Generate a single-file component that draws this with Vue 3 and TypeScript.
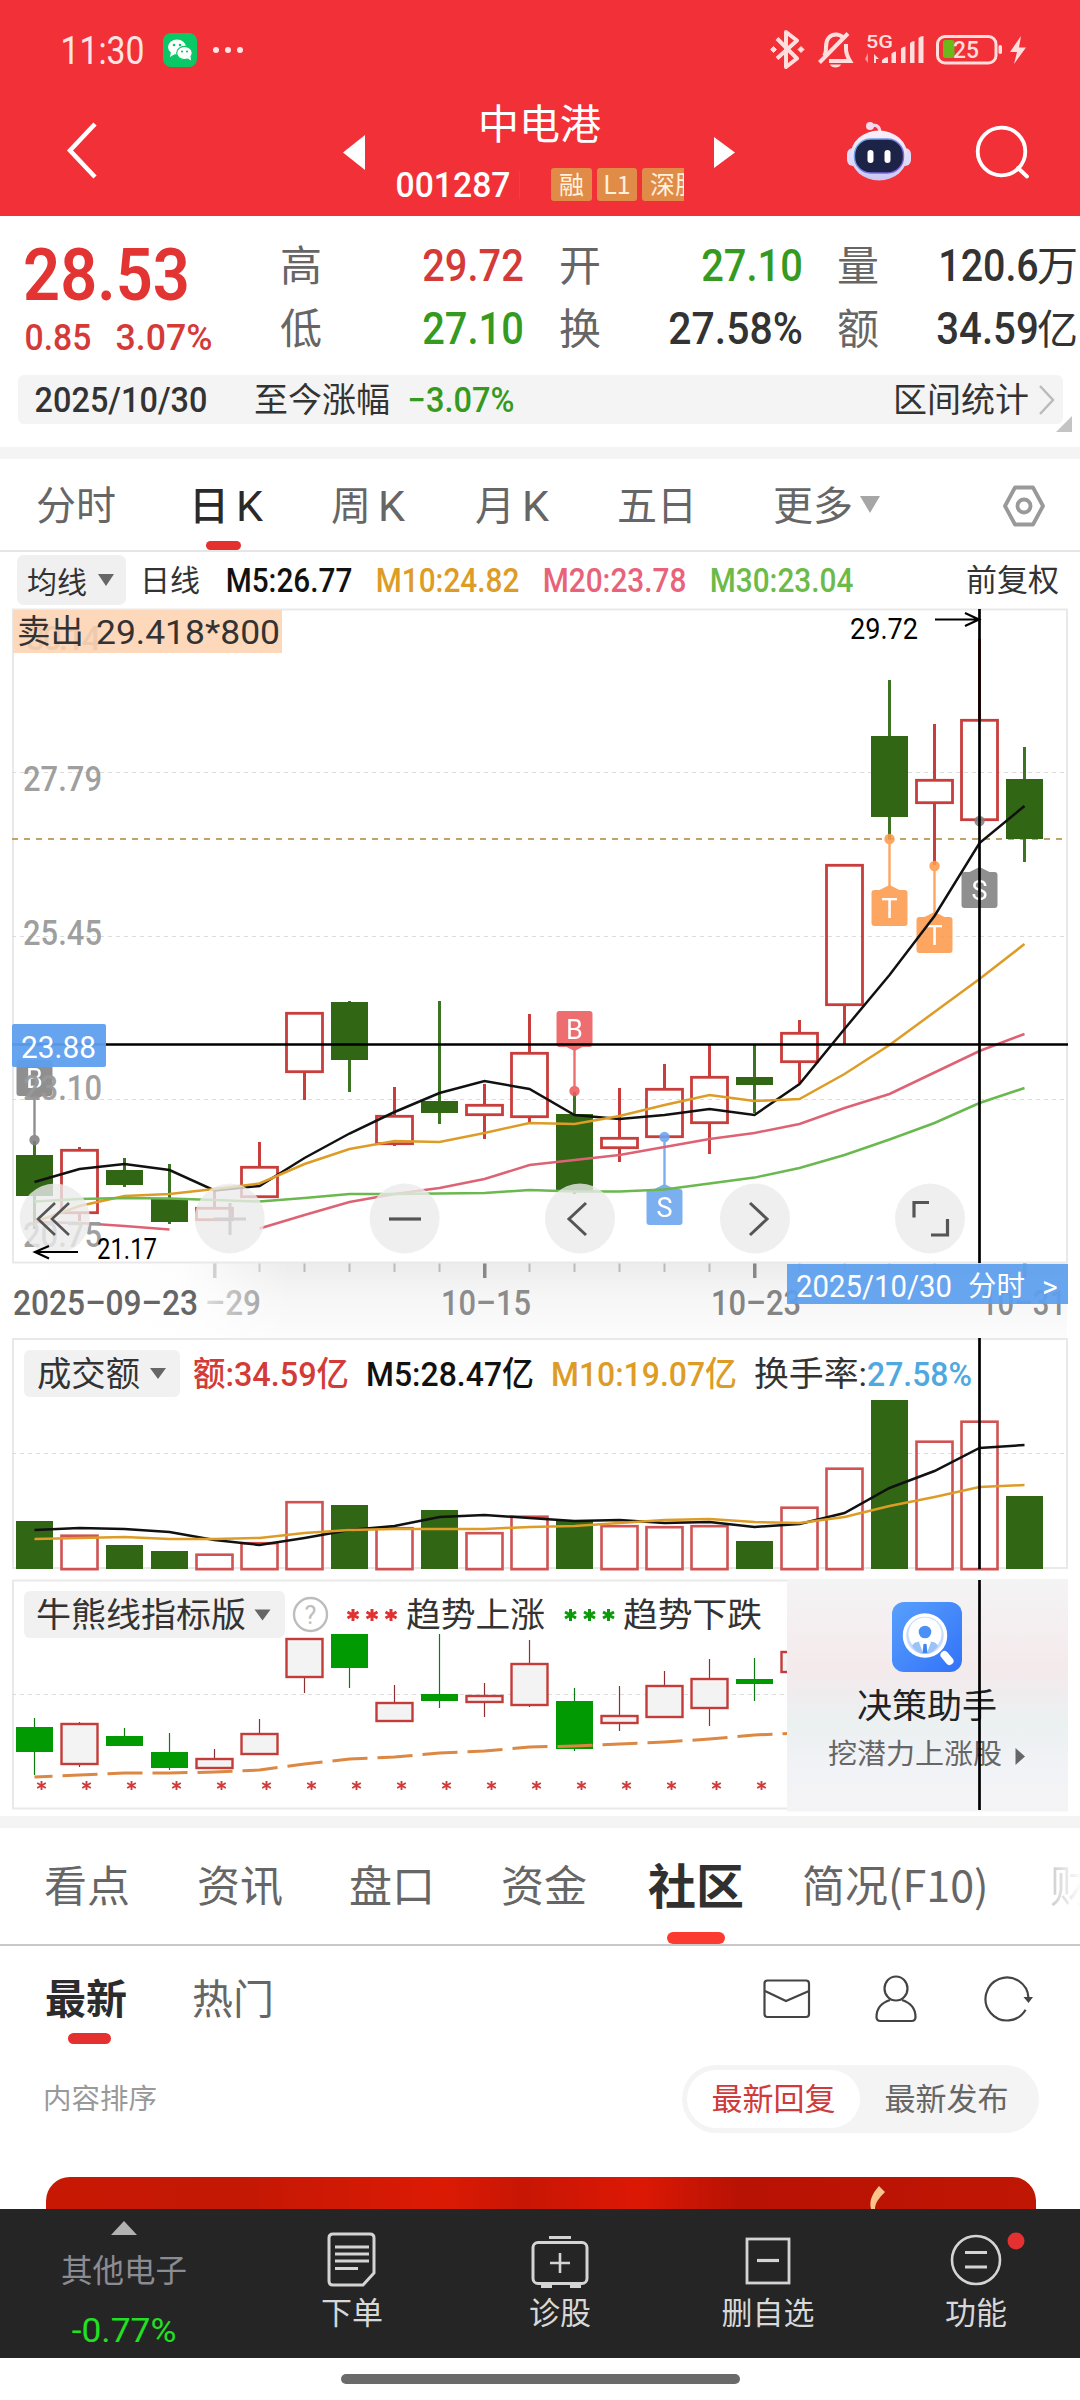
<script setup lang="ts">
import { h } from 'vue'

interface FitProps {
  text: string
  w: number
  size: number
  fill?: string
  weight?: number
}

// Condensed figures: the box is as tall as the capitals and as wide as the ink.
const Fit = (p: FitProps) =>
  h(
    'svg',
    {
      width: p.w,
      height: Math.round(p.size * 0.71),
      style: { display: 'block', overflow: 'visible', flex: 'none' },
    },
    [
      h(
        'text',
        {
          x: -p.size * 0.04,
          y: Math.round(p.size * 0.71),
          textLength: p.w + p.size * 0.08,
          lengthAdjust: 'spacingAndGlyphs',
          fill: p.fill ?? '#333',
          style: {
            fontFamily: 'Roboto, "Noto Sans CJK SC", sans-serif',
            fontSize: p.size + 'px',
            fontWeight: p.weight ?? 500,
          },
        },
        p.text,
      ),
    ],
  )

interface Label {
  t: string
  x: number
  y: number
  w: number
  s: number
  c: string
  b?: number
}

const RED = '#c83e3c'
const GREEN = '#306614'
const cx = (i: number): number => 34.5 + 45 * i

// [up, bodyTop, bodyBottom, wickTop, wickBottom]
type Candle = [number, number, number, number, number]
const candles: Candle[] = [
  [0, 1155, 1196, 1141, 1229], [1, 1149, 1214, 1147, 1221], [0, 1170, 1185, 1158, 1187],
  [0, 1199, 1222, 1164, 1224], [1, 1207, 1221, 1190, 1221], [1, 1166, 1198, 1142, 1198],
  [1, 1012, 1073, 1012, 1100], [0, 1002, 1060, 1001, 1092], [1, 1115, 1145, 1087, 1146],
  [0, 1101, 1113, 1001, 1124], [1, 1104, 1116, 1084, 1139], [1, 1052, 1118, 1014, 1123],
  [0, 1114, 1192, 1092, 1194], [1, 1137, 1149, 1088, 1162], [1, 1088, 1138, 1064, 1138],
  [1, 1076, 1124, 1045, 1154], [0, 1077, 1085, 1044, 1113], [1, 1032, 1063, 1020, 1083],
  [1, 864, 1006, 864, 1044], [0, 736, 817, 680, 839], [1, 779, 804, 724, 865],
  [1, 719, 821, 639, 821], [0, 779, 839, 747, 862],
]
const ma = (a: number[], from = 0): string =>
  a.map((y, i) => `${cx(i + from)},${y}`).join(' ')
const lines: { c: string; p: string }[] = [
  { c: '#111', p: ma([1182, 1169, 1164, 1170, 1190.5, 1186, 1158, 1133.5, 1112, 1093, 1081, 1089, 1115, 1119, 1115, 1109, 1115, 1084, 1029, 975, 916, 843, 806]) },
  { c: '#dd9c26', p: ma([1222, 1206, 1196, 1194, 1189, 1183.5, 1164, 1149, 1141, 1142, 1133, 1123, 1124, 1116, 1105, 1095, 1101, 1099, 1074, 1045, 1012, 979, 944]) },
  { c: '#dd6374', p: ma([1222, 1223, 1226, 1229.5]) },
  { c: '#dd6374', p: ma([1228.5, 1215, 1202, 1194, 1188, 1179, 1165, 1160, 1155, 1147, 1139, 1133, 1124, 1108, 1094, 1072.5, 1051, 1034], 5) },
  { c: '#6ab84f', p: ma([1201.5, 1199, 1198, 1198.5, 1200, 1201.5, 1198, 1194, 1194, 1193.5, 1193, 1190, 1191.5, 1191.5, 1189.5, 1183.5, 1177.6, 1168, 1155, 1139.5, 1123, 1103, 1088]) },
]

const volumes: [number, number][] = [
  [0, 1521], [1, 1534.5], [0, 1545], [0, 1551], [1, 1553.5], [1, 1542], [1, 1501], [0, 1505],
  [1, 1527], [0, 1510], [1, 1532], [1, 1515.5], [0, 1521], [1, 1525], [1, 1526], [1, 1525],
  [0, 1541], [1, 1506.5], [1, 1467.5], [0, 1400], [1, 1440.5], [1, 1420.5], [0, 1496],
]
const volM5 = ma([1530, 1528, 1529, 1532, 1540, 1545, 1538, 1530, 1526, 1517, 1515, 1518, 1521, 1520, 1523, 1522, 1527, 1524, 1513, 1488, 1471, 1448, 1445])
const volM10 = ma([1539, 1538, 1537, 1539, 1539, 1538, 1533, 1530, 1529, 1529, 1529, 1527, 1526, 1523, 1520, 1519, 1522, 1523, 1517, 1506, 1497, 1487, 1485])

const trend: Candle[] = [
  [0, 1727, 1752, 1718, 1775], [1, 1723, 1764, 1722, 1767], [0, 1736, 1746, 1728, 1746],
  [0, 1752, 1768, 1733, 1770], [1, 1758, 1768, 1749, 1768], [1, 1733, 1754, 1719, 1754],
  [1, 1638, 1677, 1638, 1693], [0, 1634, 1668, 1634, 1688], [1, 1702, 1721, 1685, 1722],
  [0, 1694, 1701, 1634, 1708], [1, 1695, 1702, 1683, 1717], [1, 1663, 1705, 1640, 1707],
  [0, 1701, 1749, 1688, 1751], [1, 1715, 1723, 1686, 1731], [1, 1685, 1717, 1671, 1717],
  [1, 1678, 1708, 1659, 1726], [0, 1679, 1684, 1658, 1701], [1, 1651, 1672, 1651, 1672],
]
const trendY = [1777, 1775, 1773, 1773, 1772, 1770, 1764, 1759, 1757, 1753, 1751, 1747, 1746, 1744, 1742, 1739, 1735, 1733, 1730]
const trendDashes: string[] = trendY.slice(0, 18).map((y, i) => {
  const left = i === 0 ? `${cx(0)},${y}` : `${cx(i) - 17},${y + (trendY[i - 1] - y) * 0.38}`
  return `${left} ${cx(i)},${y} ${cx(i) + 18},${y + (trendY[i + 1] - y) * 0.4}`
})

const axisLabels: Label[] = [
  { t: '27.79', x: 24, y: 790.5, w: 77, s: 35, c: '#999' },
  { t: '25.45', x: 24, y: 944.5, w: 77, s: 35, c: '#999' },
  { t: '23.10', x: 24, y: 1100, w: 77, s: 35, c: '#999' },
  { t: '20.75', x: 24, y: 1247, w: 77, s: 35, c: '#999' },
]
const dateLabels: Label[] = [
  { t: '2025–09–23', x: 14, y: 1315, w: 183, s: 35, c: '#666' },
  { t: '10–15', x: 442, y: 1315, w: 88, s: 35, c: '#8c8c8c' },
  { t: '10–23', x: 712, y: 1315, w: 88, s: 35, c: '#848484' },
  { t: '10–31', x: 982, y: 1315, w: 83, s: 35, c: '#8c8c8c' },
]
const headLabels: Label[] = [
  { t: '成交额', x: 38, y: 1386, w: 101, s: 34, c: '#333', b: 400 },
  { t: '额:34.59亿', x: 194, y: 1386, w: 154, s: 34, c: '#d23b38' },
  { t: 'M5:28.47亿', x: 367, y: 1386, w: 166, s: 34, c: '#111' },
  { t: 'M10:19.07亿', x: 552, y: 1386, w: 184, s: 34, c: '#dd9c26' },
  { t: '换手率:', x: 755, y: 1386, w: 111, s: 34, c: '#333', b: 400 },
  { t: '27.58%', x: 868, y: 1386, w: 103, s: 34, c: '#4fa8e0' },
  { t: '牛熊线指标版', x: 37, y: 1627, w: 208, s: 34, c: '#333', b: 400 },
  { t: '趋势上涨', x: 407, y: 1627, w: 137, s: 34, c: '#333', b: 400 },
  { t: '趋势下跌', x: 624, y: 1627, w: 137, s: 34, c: '#333', b: 400 },
]

interface Marker { i: number; t: string; c: string; top: number; dot: number; up: boolean }
const markers: Marker[] = [
  { i: 0, t: 'B', c: '#808080', top: 1060, dot: 1140, up: false },
  { i: 12, t: 'B', c: '#ec5a5c', top: 1011, dot: 1091, up: false },
  { i: 14, t: 'S', c: '#6ba5ee', top: 1189, dot: 1137, up: true },
  { i: 19, t: 'T', c: '#fd9a4c', top: 890, dot: 839, up: true },
  { i: 20, t: 'T', c: '#fd9a4c', top: 917, dot: 866, up: true },
  { i: 21, t: 'S', c: '#808080', top: 872, dot: 821, up: true },
]

const periods = [
  { t: '分时', x: 36, w: 80 }, { t: '日', k: true, x: 189, w: 74, on: true }, { t: '周', k: true, x: 331, w: 74 },
  { t: '月', k: true, x: 475, w: 74 }, { t: '五日', x: 617, w: 80 }, { t: '更多', x: 773, w: 80 },
]
const gap = (list: { x: number; w: number }[], i: number): number =>
  i === 0 ? list[0].x : list[i].x - list[i - 1].x - list[i - 1].w

const sections = [
  { t: '看点', x: 44, w: 86 }, { t: '资讯', x: 197, w: 86 }, { t: '盘口', x: 349, w: 86 },
  { t: '资金', x: 501, w: 86 }, { t: '社区', x: 648, w: 97, on: true }, { t: '简况(F10)', x: 802, w: 186 },
  { t: '财', x: 1050, w: 86, fade: true },
]
</script>

<template>
  <div class="app">
    <header class="top">
      <div class="status">
        <Fit text="11:30" :w="81" :size="38" fill="#ffe4e4" :weight="400" />
        <svg class="wechat" width="34" height="34" viewBox="0 0 34 34">
          <rect width="34" height="34" rx="8" fill="#0bc866" />
          <ellipse cx="14" cy="14" rx="9" ry="7.6" fill="#fff" />
          <path d="M8 19l-1 5 5-3z" fill="#fff" />
          <ellipse cx="21.5" cy="20" rx="7.8" ry="6.6" fill="#fff" stroke="#0bc866" stroke-width="1.2" />
          <path d="M24 25l4 2.6-.6-4.6z" fill="#fff" />
          <g fill="#0bc866"><circle cx="11" cy="12" r="1.3" /><circle cx="17" cy="12" r="1.3" /><circle cx="19" cy="18.5" r="1.1" /><circle cx="24" cy="18.5" r="1.1" /></g>
        </svg>
        <i class="pip" /><i class="pip" /><i class="pip" />
        <svg class="sys" width="262" height="44" viewBox="768 28 262 44" fill="none" stroke="#ffdede">
          <path d="M777 38.500l20 20-11 8.500v-35l11 8.500-20 18" stroke-width="4" stroke-linejoin="round" />
          <g fill="#ffdede" stroke="none"><path d="M773.500 46.500l3 3-3 3-3-3zM801 46.500l3 3-3 3-3-3z" stroke="#ffdede" stroke-width="1" /></g>
          <path d="M824 56c2-2.500 2-5 2-9 0-8 4-12.500 10-12.500 3 0 5 1 7 3M846 44v5c0 5 1 7 4 12h-21" stroke-width="4" />
          <path d="M819.500 62.500L848 33.500" stroke-width="4" />
          <path d="M830 64.500h11c-1 4-10 4-11 0z" fill="#ffdede" stroke="none" />
          <text x="866" y="48" textLength="27" lengthAdjust="spacingAndGlyphs" class="net">5G</text>
          <g fill="#ffdede" stroke="none">
            <path d="M882 63v-3q3-3 6-3v6zM891.500 63V53.500q2-2 4.500-2V63zM901 63V48.500q2-2 4.500-2V63zM910 63V43q2-2 4.500-2V63zM918.500 63V38q2-2 5-2V63z" />
            <path d="M874 54l5 5h-3v4h-2z" /><path d="M868 53v10l-3-4z" opacity=".6" />
          </g>
          <rect x="937.500" y="36.500" width="58.500" height="26.500" rx="7.500" stroke-width="3" />
          <rect x="943" y="40" width="11.500" height="18" rx="2.500" fill="#6ab81a" stroke="none" />
          <text x="953" y="58" textLength="26" lengthAdjust="spacingAndGlyphs" class="pct">25</text>
          <rect x="998.500" y="45" width="3.500" height="9" rx="1.700" fill="#ffdede" stroke="none" />
          <path d="M1021 36l-11 16h7l-3 12 12-16.500h-7z" fill="#ffdede" stroke="none" />
        </svg>
      </div>
      <div class="nav">
        <svg class="back" width="36" height="60" viewBox="0 0 36 60"><path d="M31 4L6 30.500 31 57" fill="none" stroke="#fff" stroke-width="4.500" /></svg>
        <svg class="prev" width="22" height="35" viewBox="0 0 22 35"><path d="M22 0v35L0 17.500z" fill="#fff" /></svg>
        <div class="stock">
          <div class="name">中电港</div>
          <div class="code">
            <Fit text="001287" :w="112" :size="35" fill="#fff" />
            <i class="sep" />
            <div class="tags"><span>融</span><span class="l1">L1</span><span class="deep">深股</span></div>
          </div>
        </div>
        <svg class="next" width="21" height="31" viewBox="0 0 21 31"><path d="M0 0v31l21-15.500z" fill="#fff" /></svg>
        <svg class="robot" width="64" height="60" viewBox="0 0 64 60">
          <defs>
            <linearGradient id="shell" x1="0" y1="0" x2="0" y2="1"><stop offset="0" stop-color="#fdf0fa" /><stop offset=".6" stop-color="#e0daf6" /><stop offset="1" stop-color="#c9c6f4" /></linearGradient>
            <linearGradient id="rim" x1="0" y1="0" x2="1" y2="1"><stop offset="0" stop-color="#6cb8e8" /><stop offset="1" stop-color="#7b4ee0" /></linearGradient>
          </defs>
          <path d="M24 5c6-2 9 1 9 7" fill="none" stroke="#f6d4e8" stroke-width="3" />
          <circle cx="23" cy="5" r="4" fill="#f8d9ec" />
          <rect x="0" y="27" width="64" height="18" rx="6" fill="#dedaf8" />
          <ellipse cx="32" cy="34.500" rx="28.500" ry="25" fill="url(#shell)" />
          <rect x="7.500" y="18" width="49" height="34" rx="16" fill="#1c2346" stroke="url(#rim)" stroke-width="1.400" />
          <rect x="20.500" y="29" width="6" height="13" rx="3" fill="#fff" /><rect x="37.500" y="29" width="6" height="13" rx="3" fill="#fff" />
        </svg>
        <svg class="search" width="56" height="56" viewBox="0 0 56 56" fill="none" stroke="#fff" stroke-width="3.800"><circle cx="26.500" cy="26.500" r="23.800" /><path d="M43 43l9 8.500" stroke-linecap="round" /></svg>
      </div>
    </header>

    <section class="quote">
      <div class="price">
        <Fit text="28.53" :w="161" :size="73" fill="#e23432" :weight="600" />
        <div class="delta">
          <Fit text="0.85" :w="64" :size="37" fill="#d43a38" />
          <Fit text="3.07%" :w="94" :size="37" fill="#d43a38" />
        </div>
      </div>
      <div class="pair p1">
        <div><span>高</span><Fit text="29.72" :w="98" :size="44" fill="#d43a38" /></div>
        <div><span>低</span><Fit text="27.10" :w="98" :size="44" fill="#349a22" /></div>
      </div>
      <div class="pair p2">
        <div><span>开</span><Fit text="27.10" :w="98" :size="44" fill="#349a22" /></div>
        <div><span>换</span><Fit text="27.58%" :w="131" :size="44" /></div>
      </div>
      <div class="pair p3">
        <div><span>量</span><div class="big"><Fit text="120.6" :w="97" :size="44" /><b>万</b></div></div>
        <div><span>额</span><div class="big"><Fit text="34.59" :w="99" :size="44" /><b>亿</b></div></div>
      </div>
    </section>

    <section class="range">
      <Fit text="2025/10/30" :w="170" :size="35" />
      <span class="since">至今涨幅</span>
      <Fit text="−3.07%" :w="104" :size="35" fill="#349a22" />
      <span class="stat">区间统计</span>
      <svg width="18" height="32" viewBox="0 0 18 32"><path d="M2 2l13 14L2 30" fill="none" stroke="#bbb" stroke-width="2.500" /></svg>
      <svg class="corner" width="16" height="16"><path d="M16 0v16H0z" fill="#c4c4c4" /></svg>
    </section>

    <div class="band" />

    <nav class="periods">
      <div v-for="(p, i) in periods" :key="p.t" class="period" :class="{ on: p.on }" :style="{ marginLeft: gap(periods, i) + 'px', width: p.w + 'px' }">
        <span>{{ p.t }}</span><span v-if="p.k" class="k">K</span>
      </div>
      <svg class="more" width="20" height="17"><path d="M0 0h20L10 17z" fill="#a6a6a6" /></svg>
      <svg class="hex" width="42" height="42" viewBox="0 0 42 42" fill="none" stroke="#999" stroke-width="3.800"><path d="M12 2.500h18l10 18.500-10 18.500H12L2 21z" stroke-linejoin="round" /><circle cx="21" cy="21" r="6.500" /></svg>
    </nav>

    <div class="averages">
      <div class="pick"><span>均线</span><svg width="16" height="12"><path d="M0 0h16L8 12z" fill="#666" /></svg></div>
      <span class="daily">日线</span>
      <Fit text="M5:26.77" :w="124" :size="33" fill="#111" style="margin-left: 27px" />
      <Fit text="M10:24.82" :w="141" :size="33" fill="#dd9c26" style="margin-left: 26px" />
      <Fit text="M20:23.78" :w="141" :size="33" fill="#e8637a" style="margin-left: 26px" />
      <Fit text="M30:23.04" :w="141" :size="33" fill="#6cbb4a" style="margin-left: 26px" />
      <span class="adjust">前复权</span>
    </div>

    <svg class="charts" width="1080" height="1208" viewBox="0 608 1080 1208">
      <defs>
        <linearGradient id="axis" x1="0" y1="0" x2="0" y2="1"><stop offset="0" stop-color="#ececec" /><stop offset=".45" stop-color="#f6f6f6" /><stop offset="1" stop-color="#fcfcfc" /></linearGradient>
        <linearGradient id="veil" x1="0" y1="0" x2="1" y2="0"><stop offset="0" stop-color="#fff" /><stop offset=".62" stop-color="#fff" stop-opacity=".9" /><stop offset="1" stop-color="#fff" stop-opacity="0" /></linearGradient>
        <linearGradient id="promo" x1="0" y1="0" x2="0" y2="1"><stop offset="0" stop-color="#f4f4f5" /><stop offset=".38" stop-color="#f4eaec" /><stop offset=".62" stop-color="#ebf0f1" /><stop offset=".82" stop-color="#f2f3f6" /><stop offset="1" stop-color="#f5f3f6" /></linearGradient>
        <linearGradient id="tile" x1="0" y1="0" x2="1" y2="1"><stop offset="0" stop-color="#58a0fd" /><stop offset="1" stop-color="#3272f8" /></linearGradient>
        <clipPath id="left"><rect x="12" y="1580" width="776" height="232" /></clipPath>
      </defs>

      <!-- date axis -->
      <rect x="0" y="1263" width="1067" height="75" fill="url(#axis)" />
      <rect v-for="i in 19" :key="'t' + i" :x="cx(i + 3) - ((i + 3) % 6 === 4 ? 1.5 : 1)" y="1263" :width="(i + 3) % 6 === 4 ? 3.500 : 2" :height="(i + 3) % 6 === 4 ? 15 : 9" :fill="(i + 3) % 6 === 4 ? '#888' : '#bbb'" />
      <text x="205" y="1315" textLength="56" lengthAdjust="spacingAndGlyphs" class="num" font-size="35" fill="#8c8c8c">–29</text>
      <rect x="0" y="1263" width="290" height="75" fill="url(#veil)" />
      <text v-for="l in dateLabels" :key="l.t" :x="l.x - 1" :y="l.y" :textLength="l.w + 2" lengthAdjust="spacingAndGlyphs" class="num" :font-size="l.s" :fill="l.c">{{ l.t }}</text>

      <!-- frames and grid -->
      <g fill="none" stroke="#e9e9e9" stroke-width="2">
        <rect x="13" y="609.500" width="1054" height="653" />
        <rect x="13" y="1339" width="1054" height="229" />
        <rect x="13" y="1580.500" width="1054" height="228" />
      </g>
      <g stroke="#dcdcdc" stroke-width="1.200" stroke-dasharray="4 4"><path d="M12 772.500H1066M12 936.500H1066M12 1099.500H1066M12 1453.500H1066M12 1694.500H788" /></g>
      <path d="M12 839H1064" stroke="#c2a268" stroke-width="2" stroke-dasharray="6 6" />

      <!-- candles -->
      <g v-for="(k, i) in candles" :key="'c' + i">
        <template v-if="k[0]">
          <path :d="`M${cx(i)} ${k[3]}V${k[1]}M${cx(i)} ${k[2]}V${k[4]}`" :stroke="RED" stroke-width="3" />
          <rect :x="cx(i) - 18" :y="k[1] + 1.300" width="36" :height="k[2] - k[1] - 2.600" fill="none" :stroke="RED" stroke-width="2.800" />
        </template>
        <template v-else>
          <path :d="`M${cx(i)} ${k[3]}V${k[4]}`" stroke="#3c7424" stroke-width="3" />
          <rect :x="cx(i) - 18.500" :y="k[1]" width="37" :height="k[2] - k[1]" :fill="GREEN" />
        </template>
      </g>

      <!-- trade markers -->
      <g v-for="m in markers" :key="'m' + m.i" opacity=".88">
        <path v-if="m.i !== 21" :d="`M${cx(m.i)} ${m.up ? m.top - 4 : m.top + 36}V${m.dot}`" :stroke="m.c" stroke-width="2.400" />
        <circle :cx="cx(m.i)" :cy="m.dot" r="5.200" :fill="m.c" />
        <path v-if="m.up" :d="`M${cx(m.i) - 10} ${m.top}l10 -5 10 5z`" :fill="m.c" />
        <path v-else :d="`M${cx(m.i) - 10} ${m.top + 35}l10 5 10 -5z`" :fill="m.c" />
        <rect :x="cx(m.i) - 18" :y="m.top" width="36" height="36" rx="3" :fill="m.c" />
        <text :x="cx(m.i)" :y="m.top + 28" text-anchor="middle" class="mark">{{ m.t }}</text>
      </g>

      <polyline v-for="(l, i) in lines" :key="'l' + i" :points="l.p" fill="none" :stroke="l.c" stroke-width="2.500" />
      <text v-for="l in axisLabels" :key="l.t" :x="l.x - 1" :y="l.y" :textLength="l.w + 2" lengthAdjust="spacingAndGlyphs" class="num" :font-size="l.s" :fill="l.c" fill-opacity=".95">{{ l.t }}</text>

      <!-- chart controls -->
      <g fill="#ebebeb" fill-opacity=".8"><circle v-for="x in [54.8, 229.7, 404.6, 580, 755, 930]" :key="x" :cx="x" cy="1218.500" r="35" /></g>
      <g fill="none" stroke="#555" stroke-width="3">
        <path d="M55 1203l-17 16 17 16M69 1203l-17 16 17 16" stroke-width="2.600" />
        <path d="M214 1219h32M230 1203v32" stroke="#d2d2d2" />
        <path d="M389 1219h32" stroke-width="3.200" />
        <path d="M586 1203l-17 16 17 16M750 1203l17 16-17 16" />
        <path d="M914 1217.500v-15h15M931 1235h16.500v-16" stroke-width="3.200" />
      </g>

      <!-- sold tag, high and low -->
      <rect x="13" y="610" width="269" height="43" fill="#fdd8bb" />
      <text x="26" y="650" textLength="75" class="num" font-size="34" fill="#e9c5a8" fill-opacity=".7">30.14</text>
      <text x="17" y="643" textLength="67" lengthAdjust="spacingAndGlyphs" class="cjk" font-size="33" fill="#333">卖出</text>
      <text x="96" y="644" textLength="184" lengthAdjust="spacingAndGlyphs" class="thin" font-size="34" fill="#333">29.418*800</text>
      <text x="850" y="638.500" textLength="68" lengthAdjust="spacingAndGlyphs" class="thin" font-size="29">29.72</text>
      <path d="M935 619.500h43M965 613l14 6.500-14 6.500" fill="none" stroke="#000" stroke-width="2.200" />
      <text x="97" y="1259" textLength="60" lengthAdjust="spacingAndGlyphs" class="thin" font-size="29">21.17</text>
      <path d="M78 1252H36M49 1246l-14 6 14 6.500" fill="none" stroke="#000" stroke-width="2.200" />

      <!-- volume bars -->
      <g v-for="(v, i) in volumes" :key="'v' + i">
        <rect v-if="v[0]" :x="cx(i) - 18" :y="v[1] + 1.200" width="36" :height="1568 - v[1]" fill="none" stroke="#cf5352" stroke-width="2.600" />
        <rect v-else :x="cx(i) - 18.500" :y="v[1]" width="37" :height="1569 - v[1]" :fill="GREEN" />
      </g>
      <g fill="none" stroke-width="2.500"><polyline :points="volM5" stroke="#111" /><polyline :points="volM10" stroke="#dd9c26" /></g>

      <!-- indicator -->
      <g clip-path="url(#left)">
        <g v-for="(k, i) in trend" :key="'i' + i">
          <path :d="`M${cx(i)} ${k[3]}V${k[4]}`" :stroke="k[0] ? '#8e3030' : '#0f7a14'" stroke-width="1.200" />
          <rect v-if="k[0]" :x="cx(i) - 18" :y="k[1] + 1" width="36" :height="k[2] - k[1] - 1" fill="#f4f3f4" stroke="#c43c3a" stroke-width="2.400" />
          <rect v-else :x="cx(i) - 18.500" :y="k[1]" width="37" :height="k[2] - k[1]" fill="#029a02" />
        </g>
        <polyline v-for="(d, i) in trendDashes" :key="'d' + i" :points="d" fill="none" stroke="#dc8843" stroke-width="3" />
        <g v-for="i in 17" :key="'s' + i" stroke="#cf3a3a" stroke-width="1.900"><path :d="`M${cx(i) - 38} 1781v9m-4.300 -7l8.600 5m0 -5l-8.600 5`" /></g>
      </g>
      <rect x="24" y="1350" width="156" height="47" rx="6" fill="#f1f1f1" />
      <rect x="24" y="1591" width="261" height="47" rx="6" fill="#f1f1f1" />
      <path d="M150 1368h16l-8 11zM254.500 1609.500h16l-8 11z" fill="#666" />
      <text v-for="l in headLabels" :key="l.t" :x="l.x - 1" :y="l.y" :textLength="l.w + 2" lengthAdjust="spacingAndGlyphs" class="num" :font-size="l.s" :fill="l.c" :style="{ fontWeight: l.b ?? 500 }">{{ l.t }}</text>
      <circle cx="310.500" cy="1614.500" r="16.500" fill="none" stroke="#bdbdbd" stroke-width="2.400" />
      <text x="310.500" y="1623.500" text-anchor="middle" class="thin" font-size="25" fill="#bdbdbd">?</text>
      <path v-for="x in [353, 372, 391]" :key="x" :d="`M${x} 1609v12m-5.500 -9l11 6m0 -6l-11 6`" stroke="#e03030" stroke-width="3" />
      <path v-for="x in [570.5, 589.5, 608.5]" :key="x" :d="`M${x} 1609v12m-5.500 -9l11 6m0 -6l-11 6`" stroke="#0a9a0a" stroke-width="3" />

      <!-- promo card -->
      <rect x="787" y="1579.500" width="281" height="232" fill="url(#promo)" />
      <rect x="892" y="1602" width="70" height="70" rx="12" fill="url(#tile)" />
      <circle cx="925" cy="1635.500" r="20.500" fill="#c9dcfb" stroke="#fff" stroke-width="3.500" />
      <circle cx="925" cy="1634" r="16.500" fill="#fff" />
      <path d="M912 1646c3-6 8-4 13-4s10-2 13 4c-3 5-8 8-13 8s-10-3-13-8z" fill="#9cc3f8" />
      <circle cx="925" cy="1632" r="6.300" fill="#4a90f5" />
      <path d="M919 1642l4 11 2-11 2 11 4-11z" fill="#fff" /><path d="M923.500 1644h3l1 9h-5z" fill="#3d84f0" />
      <path d="M944.500 1655l5 6" stroke="#fff" stroke-width="8" stroke-linecap="round" />
      <text x="857" y="1718" textLength="140" lengthAdjust="spacingAndGlyphs" class="cjk" font-size="34" fill="#222">决策助手</text>
      <text x="828" y="1764" textLength="174" lengthAdjust="spacingAndGlyphs" class="cjk" font-size="28.500" fill="#666">挖潜力上涨股</text>
      <path d="M1015.500 1748v17l9.500-8.500z" fill="#666" />

      <!-- crosshair -->
      <path d="M12 1044.500H1068M979.500 609V1263M979.500 1338V1569M979.500 1580V1810" stroke="#000" stroke-width="2.700" />
      <rect x="12" y="1024" width="94" height="43" rx="2" fill="#5f9fee" fill-opacity=".95" />
      <text x="21" y="1058" textLength="75" lengthAdjust="spacingAndGlyphs" class="thin" font-size="31" fill="#fff">23.88</text>
      <rect x="787" y="1264" width="281" height="40" fill="#5f9fee" fill-opacity=".94" />
      <text x="796" y="1297" textLength="156" lengthAdjust="spacingAndGlyphs" class="thin" font-size="31" fill="#fff">2025/10/30</text>
      <text x="968" y="1296" textLength="57" lengthAdjust="spacingAndGlyphs" class="cjk" font-size="28" fill="#fff">分时</text>
      <text x="1042" y="1297" textLength="17" class="thin" font-size="30" fill="#fff">&gt;</text>
    </svg>

    <div class="band thin-band" />

    <nav class="sections">
      <div v-for="(s, i) in sections" :key="s.t" class="section" :class="{ on: s.on, fade: s.fade }" :style="{ marginLeft: gap(sections, i) + 'px', width: s.w + 'px' }">{{ s.t }}</div>
    </nav>

    <div class="feed">
      <div class="newest">最新</div>
      <div class="hot">热门</div>
      <svg class="mail" width="48" height="40" viewBox="0 0 48 40" fill="none" stroke="#444" stroke-width="2.200"><rect x="1.500" y="1.500" width="44.500" height="36.500" rx="3" /><path d="M2 12l21 10L46 12" /></svg>
      <svg class="person" width="42" height="48" viewBox="0 0 42 48" fill="none" stroke="#444" stroke-width="2.200"><ellipse cx="21" cy="13.500" rx="11.500" ry="12" /><path d="M15 25C6 28 1.500 34 1.500 42q0 4 4 4h31q4 0 4-4C40.500 34 36 28 27 25" /></svg>
      <svg class="reload" width="50" height="46" viewBox="0 0 50 46"><path d="M42.600 33.800A21.500 21.500 0 1 1 45.500 22" fill="none" stroke="#444" stroke-width="2.200" /><path d="M40.500 21h9.500l-4.500 6z" fill="#444" /></svg>
    </div>

    <div class="sort">
      <span class="hint">内容排序</span>
      <div class="segment"><span class="seg active">最新回复</span><span class="seg">最新发布</span></div>
    </div>

    <div class="banner">
      <svg width="990" height="32" viewBox="0 0 990 32"><path d="M833 9l6 6c-6 6-10 11-10 17h-4c-2-8 1-15 8-23z" fill="#fbc48c" /></svg>
    </div>

    <footer class="dock">
      <div class="sector">
        <svg width="26" height="14"><path d="M13 0l13 14H0z" fill="#b2b2b2" /></svg>
        <span>其他电子</span>
        <Fit text="-0.77%" :w="102" :size="34" fill="#22e022" :weight="400" />
      </div>
      <div class="item">
        <svg width="50" height="56" viewBox="0 0 50 56" fill="none" stroke="#d4d4d4" stroke-width="3"><path d="M6 2h37q4 0 4 4v35L36 53H6q-4 0-4-4V6q0-4 4-4z" /><path d="M8 15h34M8 22h34M8 29h34M8 36.500h23" /></svg>
        <span>下单</span>
      </div>
      <div class="item">
        <svg width="60" height="56" viewBox="0 0 60 56" fill="none" stroke="#d4d4d4" stroke-width="3"><path d="M19 5.500h22" /><rect x="3" y="10.500" width="54" height="41" rx="5" /><path d="M30 21v20M20 31h20" stroke-width="2.600" /><path d="M11 54h11M40 54h11" stroke-width="4" /></svg>
        <span>诊股</span>
      </div>
      <div class="item">
        <svg width="48" height="56" viewBox="0 0 48 56" fill="none" stroke="#d4d4d4" stroke-width="2.800"><rect x="3" y="7" width="42" height="44" /><path d="M13 28.500h22" stroke-width="3.200" /></svg>
        <span>删自选</span>
      </div>
      <div class="item">
        <svg width="100" height="56" viewBox="0 0 100 56" fill="none" stroke="#d4d4d4" stroke-width="2.600"><circle cx="50" cy="28" r="24" /><path d="M39 20.500h22M39 35h22" stroke-width="3" /><circle cx="90" cy="9" r="8.500" fill="#e43030" stroke="none" /></svg>
        <span>功能</span>
      </div>
    </footer>
    <div class="home"><i /></div>
  </div>
</template>

<style>
html, body { background: #fff; }
</style>

<style scoped>
.app {
  width: 1080px;
  height: 2400px;
  overflow: hidden;
  background: #fff;
  color: #333;
  font-family: "Noto Sans CJK SC", Roboto, sans-serif;
  display: flex;
  flex-direction: column;
}
.app > * { flex: none; }
svg { flex: none; display: block; }
.num { font-family: Roboto, "Noto Sans CJK SC", sans-serif; font-weight: 500; }
.thin { font-family: Roboto, "Noto Sans CJK SC", sans-serif; font-weight: 400; }
.cjk { font-family: "Noto Sans CJK SC", sans-serif; }
.mark { font: 400 27px Roboto, sans-serif; fill: #fff; }
.net { font: 500 19px Roboto, sans-serif; fill: #ffdede; stroke: none; }
.pct { font: 500 23px Roboto, sans-serif; fill: #ffdede; stroke: none; }

.top { height: 216px; background: #f23037; }
.status { height: 100px; display: flex; align-items: center; padding-left: 62px; }
.wechat { margin: 0 14px 0 20px; }
.pip { width: 6px; height: 6px; border-radius: 50%; background: #ffe4e4; margin-left: 6px; }
.pip:first-of-type { margin-left: 2px; }
.sys { margin-left: 525px; }
.nav { height: 116px; display: flex; align-items: flex-start; }
.back { margin: 20px 0 0 64px; }
.prev { margin: 35px 0 0 243px; }
.stock { margin-left: 28px; width: 293px; display: flex; flex-direction: column; }
.name { margin: -7px 0 0 85px; font-size: 41px; line-height: 56px; color: #fff; height: 56px; }
.code { display: flex; align-items: center; margin: 19px 0 0 4px; height: 33px; }
.sep { width: 1px; height: 28px; background: #d84a48; margin: 0 31px 0 10px; }
.tags { width: 133px; display: flex; gap: 5px; overflow: hidden; }
.tags span { flex: none; width: 41px; height: 33px; border-radius: 3px; background: #e18b49; color: #fff1dc; font-size: 25px; line-height: 31px; text-align: center; }
.tags .l1 { width: 40px; }
.tags .deep { width: 90px; text-align: left; text-indent: 8px; }
.next { margin: 37px 0 0 28px; }
.robot { margin: 21px 0 0 112px; }
.search { margin: 25px 0 0 64px; }

.quote { height: 159px; display: flex; }
.price { width: 281px; box-sizing: border-box; padding: 32px 0 0 26px; }
.delta { display: flex; gap: 27px; margin-top: 24px; }
.pair { display: flex; flex-direction: column; padding-top: 18px; }
.pair > div { display: flex; align-items: center; justify-content: space-between; height: 63px; }
.pair span { font-size: 42px; line-height: 56px; height: 62px; color: #666; }
.p1 { width: 242px; margin-left: -1px; }
.p2 { width: 242px; margin-left: 37px; }
.p3 { width: 242px; margin-left: 36px; }
.p3 span { width: 42px; }
.big { display: flex; align-items: center; }
.big b { font-weight: 400; font-size: 41px; line-height: 56px; height: 62px; margin-right: 1px; }

.range { height: 49px; margin: 0 17px 0 18px; border-radius: 6px; background: #f4f4f4; display: flex; align-items: center; padding-left: 18px; position: relative; font-size: 34px; line-height: 46px; }
.range span { height: 49px; }
.since { margin: 0 18px 0 48px; width: 137px; }
.stat { margin-left: 380px; margin-right: 9px; width: 136px; }
.corner { position: absolute; right: -9px; bottom: -8px; }
.band { height: 12px; margin-top: 23px; background: #f4f4f4; }
.thin-band { margin-top: 0; }

.periods { height: 93px; box-sizing: border-box; border-bottom: 2px solid #e6e6e6; display: flex; align-items: center; }
.period { position: relative; display: flex; justify-content: space-between; font-size: 40px; line-height: 90px; height: 93px; color: #666; }
.period .k { font-family: Roboto, sans-serif; font-size: 43px; line-height: 96px; font-weight: 400; }
.period.on { color: #2a2a2a; font-weight: 500; }
.period.on::after { content: ''; position: absolute; left: 17px; bottom: 1px; width: 35px; height: 9px; border-radius: 5px; background: #e53030; }
.more { margin-left: 7px; }
.hex { margin-left: 123px; margin-top: 2px; }

.averages { height: 56px; display: flex; align-items: center; font-size: 30px; line-height: 50px; }
.pick { display: flex; align-items: center; margin-left: 17px; width: 109px; height: 50px; box-sizing: border-box; padding-left: 10px; gap: 11px; border-radius: 7px; background: #f0f0f0; line-height: 46px; }
.daily { margin-left: 14px; width: 60px; height: 54px; }
.adjust { margin-left: 114px; height: 54px; font-size: 31px; }

.sections { height: 118px; box-sizing: border-box; border-bottom: 2px solid #c8c8c8; display: flex; overflow: hidden; color: #666; }
.section { flex: none; position: relative; font-size: 43px; line-height: 110px; white-space: nowrap; }
.section.on { font-size: 48px; font-weight: 700; color: #303030; }
.section.on::after { content: ''; position: absolute; left: 19px; bottom: 0; width: 58px; height: 12px; border-radius: 6px; background: #fb3a32; }
.section.fade { background: linear-gradient(90deg, #ccc, #fff 32px); -webkit-background-clip: text; background-clip: text; color: transparent; }

.feed { height: 106px; display: flex; align-items: center; }
.newest, .hot { font-size: 41px; line-height: 100px; height: 106px; }
.newest { position: relative; margin-left: 45px; width: 83px; font-weight: 700; color: #2c2c2c; }
.newest::after { content: ''; position: absolute; left: 23px; bottom: 8px; width: 43px; height: 11px; border-radius: 6px; background: #e53030; }
.hot { margin-left: 64px; width: 82px; color: #666; }
.mail { margin-left: 489px; }
.person { margin-left: 64px; }
.reload { margin-left: 66px; }

.sort { height: 94px; display: flex; justify-content: space-between; align-items: center; padding: 0 41px 0 43px; }
.hint { font-size: 28.5px; color: #999; margin-top: -5px; }
.segment { display: flex; width: 357px; height: 68px; border-radius: 34px; background: #f4f4f4; box-sizing: border-box; padding: 5px; }
.seg { width: 173px; height: 58px; line-height: 54px; border-radius: 29px; text-align: center; font-size: 31px; color: #666; }
.seg.active { background: #fff; color: #cf3a3a; }

.banner { margin: 31px 44px 0 46px; height: 32px; border-radius: 24px 24px 0 0; overflow: hidden; background: linear-gradient(90deg, #c81804, #c41804 20%, #dc1a04 40%, #c81604 48%, #dc1804 60%, #b81204 70%, #c01604); }

.dock { height: 149px; background: #252525; display: flex; color: #d8d8d8; }
.sector { width: 248px; display: flex; flex-direction: column; align-items: center; padding-top: 12px; box-sizing: border-box; color: #8b8b93; font-size: 31.5px; line-height: 46px; }
.sector span { margin: 10px 0 27px; }
.item { width: 208px; display: flex; flex-direction: column; align-items: center; padding-top: 23px; font-size: 31px; line-height: 44px; }
.item span { margin-top: 1px; }
.home { height: 42px; display: flex; justify-content: center; align-items: center; }
.home i { width: 399px; height: 10px; border-radius: 5px; background: #6a6a6a; }
</style>
